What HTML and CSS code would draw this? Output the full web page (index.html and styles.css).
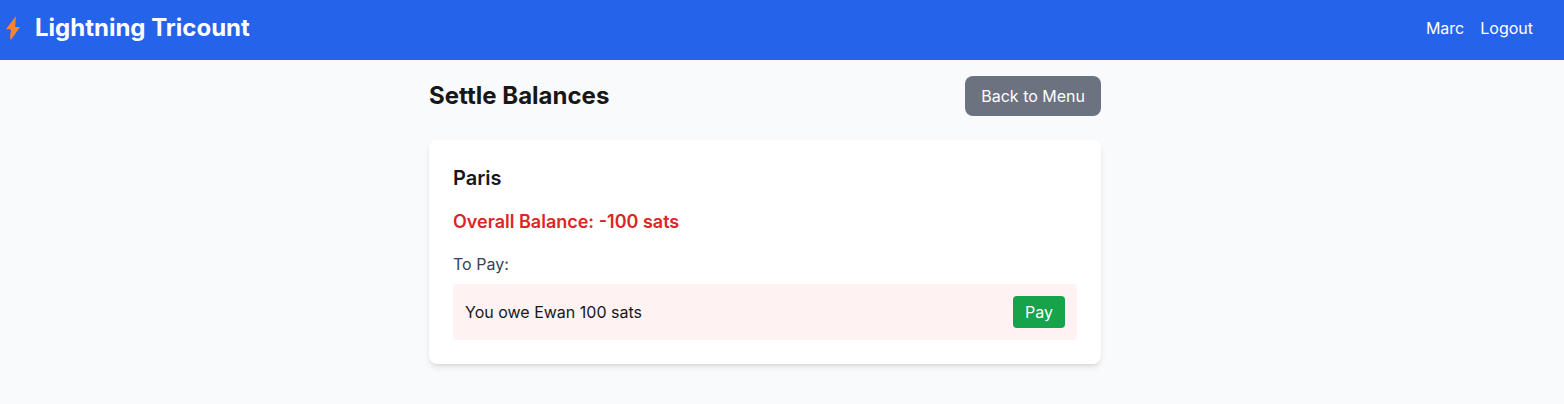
FILE: index.html
```html
<!DOCTYPE html>
<html lang="en">
<head>
  <meta charset="utf-8">
  <meta name="viewport" content="width=device-width, initial-scale=1">
  <title>Lightning Tricount</title>
  <link rel="stylesheet" href="styles.css">
</head>
<body>
  <header class="navbar">
    <a class="brand" href="#">
      <svg class="brand-icon" viewBox="0 0 14 24" aria-hidden="true">
        <path d="M9.6 0.4 0 13.2h4.9L4 23.2h1.4L14 10.9H9.2L9.8 0.4Z" fill="#ff822d"/>
      </svg>
      <span>Lightning Tricount</span>
    </a>
    <nav class="nav-links">
      <a href="#">Marc</a>
      <a href="#">Logout</a>
    </nav>
  </header>
  <main class="page">
    <div class="content">
      <div class="page-head">
        <h1 class="page-title">Settle Balances</h1>
        <button class="button-back" type="button">Back to Menu</button>
      </div>
      <section class="card">
        <h2 class="group-name">Paris</h2>
        <p class="balance">Overall Balance: -100 sats</p>
        <h3 class="list-title">To Pay:</h3>
        <div class="debt">
          <span>You owe Ewan 100 sats</span>
          <button class="button-pay" type="button">Pay</button>
        </div>
      </section>
    </div>
  </main>
</body>
</html>
```
FILE: styles.css
```css
* {
  box-sizing: border-box;
  margin: 0;
}

body {
  min-height: 100vh;
  background: #f9fafb;
  color: #171717;
  font-family: Inter, "Liberation Sans", sans-serif;
  font-size: 16px;
  line-height: 24px;
}

a {
  color: inherit;
  text-decoration: none;
}

button {
  border: 0;
  color: #fff;
  font: inherit;
  cursor: pointer;
}

.navbar {
  display: flex;
  align-items: center;
  justify-content: space-between;
  padding: 12px 31px 16px 6px;
  background: #2563eb;
  color: #fff;
}

.brand {
  display: flex;
  align-items: center;
  gap: 15px;
  font-size: 24px;
  font-weight: 700;
  line-height: 32px;
}

.brand-icon {
  width: 14px;
  height: 24px;
}

.nav-links {
  display: flex;
  gap: 16px;
}

.page {
  padding: 16px 34px 40px 0;
}

.content {
  max-width: 672px;
  margin: 0 auto;
}

.page-head {
  display: flex;
  align-items: center;
  justify-content: space-between;
  margin-bottom: 24px;
}

.page-title {
  font-size: 24px;
  font-weight: 700;
  line-height: 32px;
}

.button-back {
  padding: 8px 16px;
  border-radius: 8px;
  background: #6b7280;
}

.card {
  padding: 24px;
  border-radius: 8px;
  background: #fff;
  box-shadow: 0 4px 6px -1px rgb(0 0 0 / 10%), 0 2px 4px -2px rgb(0 0 0 / 10%);
}

.group-name {
  margin-bottom: 16px;
  font-size: 20px;
  font-weight: 600;
  line-height: 28px;
}

.balance {
  margin-bottom: 16px;
  color: #dc2626;
  font-size: 18px;
  font-weight: 600;
  line-height: 28px;
}

.list-title {
  margin-bottom: 8px;
  color: #374151;
  font-size: 16px;
  font-weight: 400;
}

.debt {
  display: flex;
  align-items: center;
  justify-content: space-between;
  padding: 12px;
  border-radius: 4px;
  background: #fef2f2;
}

.button-pay {
  padding: 4px 12px;
  border-radius: 4px;
  background: #16a34a;
}
```
